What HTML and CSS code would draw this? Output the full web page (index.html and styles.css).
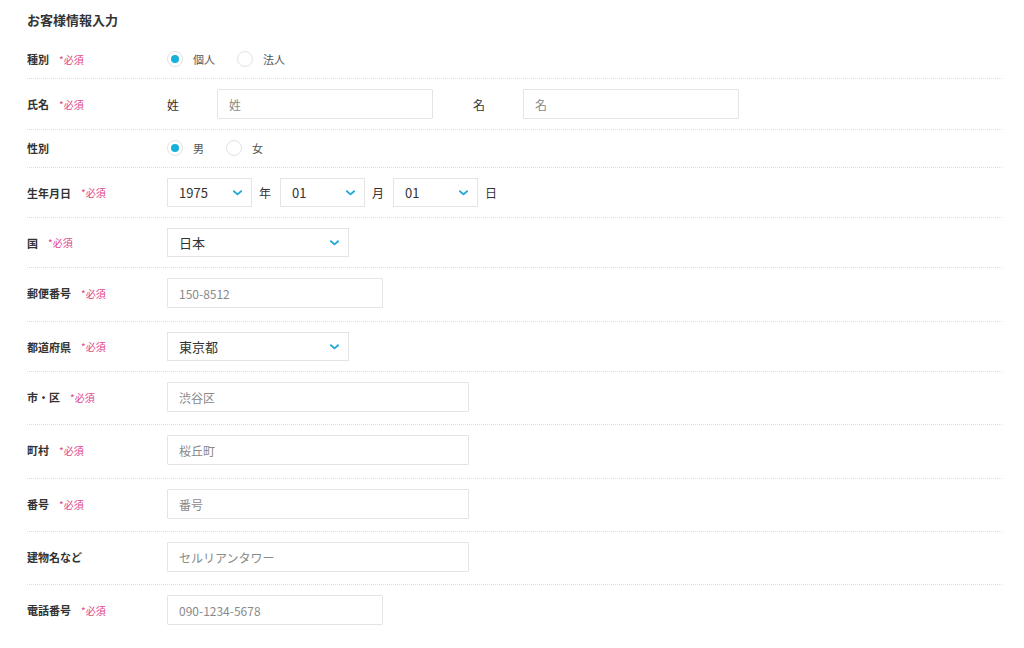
FILE: index.html
```html
<!DOCTYPE html>
<html lang="ja">
<head>
    <meta charset="UTF-8">
    <meta name="viewport" content="width=device-width, initial-scale=1.0">
    <title>お客様情報入力</title>
    <link rel="stylesheet" href="styles.css">
</head>
<body>
    <div class="form">
        <h1>お客様情報入力</h1>

        <div class="row row-radio">
            <div class="label">種別<span class="req">*必須</span></div>
            <div class="field">
                <label class="radio"><span class="dot checked"></span>個人</label>
                <label class="radio"><span class="dot"></span>法人</label>
            </div>
        </div>

        <div class="row">
            <div class="label">氏名<span class="req">*必須</span></div>
            <div class="field">
                <span class="sub">姓</span>
                <input type="text" class="input w216" placeholder="姓">
                <span class="sub sub-gap">名</span>
                <input type="text" class="input w216" placeholder="名">
            </div>
        </div>

        <div class="row row-radio">
            <div class="label">性別</div>
            <div class="field">
                <label class="radio"><span class="dot checked"></span>男</label>
                <label class="radio"><span class="dot"></span>女</label>
            </div>
        </div>

        <div class="row">
            <div class="label">生年月日<span class="req">*必須</span></div>
            <div class="field">
                <div class="select w84">1975<svg class="chev" viewBox="0 0 10 6"><path d="M1 1 L5 4.5 L9 1"/></svg></div>
                <span class="unit">年</span>
                <div class="select w84">01<svg class="chev" viewBox="0 0 10 6"><path d="M1 1 L5 4.5 L9 1"/></svg></div>
                <span class="unit">月</span>
                <div class="select w84">01<svg class="chev" viewBox="0 0 10 6"><path d="M1 1 L5 4.5 L9 1"/></svg></div>
                <span class="unit">日</span>
            </div>
        </div>

        <div class="row">
            <div class="label">国<span class="req">*必須</span></div>
            <div class="field">
                <div class="select w181">日本<svg class="chev" viewBox="0 0 10 6"><path d="M1 1 L5 4.5 L9 1"/></svg></div>
            </div>
        </div>

        <div class="row row-text row-tall">
            <div class="label">郵便番号<span class="req">*必須</span></div>
            <div class="field">
                <input type="text" class="input w215" placeholder="150-8512">
            </div>
        </div>

        <div class="row">
            <div class="label">都道府県<span class="req">*必須</span></div>
            <div class="field">
                <div class="select w181">東京都<svg class="chev" viewBox="0 0 10 6"><path d="M1 1 L5 4.5 L9 1"/></svg></div>
            </div>
        </div>

        <div class="row row-text">
            <div class="label">市・区<span class="req">*必須</span></div>
            <div class="field">
                <input type="text" class="input w301" placeholder="渋谷区">
            </div>
        </div>

        <div class="row row-text row-tall">
            <div class="label">町村<span class="req">*必須</span></div>
            <div class="field">
                <input type="text" class="input w301" placeholder="桜丘町">
            </div>
        </div>

        <div class="row row-text">
            <div class="label">番号<span class="req">*必須</span></div>
            <div class="field">
                <input type="text" class="input w301" placeholder="番号">
            </div>
        </div>

        <div class="row row-text">
            <div class="label">建物名など</div>
            <div class="field">
                <input type="text" class="input w301" placeholder="セルリアンタワー">
            </div>
        </div>

        <div class="row row-text last">
            <div class="label">電話番号<span class="req">*必須</span></div>
            <div class="field">
                <input type="text" class="input w215" placeholder="090-1234-5678">
            </div>
        </div>
    </div>
</body>
</html>
```

FILE: styles.css
```css
body {
    margin: 0;
    padding: 0;
    background-color: #fff;
    font-family: "Noto Sans CJK JP", "Liberation Sans", sans-serif;
    color: #333;
}
.form {
    margin: 0 22px 0 27px;
    padding-top: 11px;
}
h1 {
    font-size: 13px;
    line-height: 18px;
    font-weight: bold;
    margin: 0 0 12px 0;
    color: #333;
}
.row {
    display: flex;
    align-items: center;
    padding: 10px 0;
    border-bottom: 1px dotted #dcdcdc;
}
.row-radio {
    padding: 10px 0 11px 0;
    min-height: 16px;
}
.row-text {
    padding: 10px 0 12px 0;
}
.row-tall {
    padding-bottom: 13px;
}
.row.last {
    border-bottom: none;
}
.label {
    width: 140px;
    flex-shrink: 0;
    font-size: 11px;
    font-weight: bold;
    color: #333;
    display: flex;
    align-items: center;
}
.req {
    font-size: 10px;
    font-weight: normal;
    color: #e0468a;
    margin-left: 10px;
}
.field {
    display: flex;
    align-items: center;
}
.radio {
    display: flex;
    align-items: center;
    font-size: 11px;
    color: #555;
    margin-right: 22px;
}
.dot {
    width: 16px;
    height: 16px;
    border: 1px solid #e2e2e2;
    border-radius: 50%;
    box-sizing: border-box;
    display: flex;
    align-items: center;
    justify-content: center;
    margin-right: 10px;
}
.dot.checked::after {
    content: "";
    width: 8px;
    height: 8px;
    border-radius: 50%;
    background-color: #16b1da;
}
.sub {
    font-size: 12px;
    color: #333;
    width: 50px;
}
.sub-gap {
    margin-left: 40px;
}
.input {
    height: 30px;
    box-sizing: border-box;
    border: 1px solid #e4e4e4;
    border-radius: 1px;
    padding: 0 11px;
    font-family: inherit;
    font-size: 12px;
    color: #333;
    outline: none;
}
.input::placeholder {
    color: #8a8a8a;
}
.w216 { width: 216px; }
.w215 { width: 216px; }
.w301 { width: 302px; }
.w84 { width: 85px; }
.w181 { width: 182px; }
.select {
    height: 29px;
    box-sizing: border-box;
    border: 1px solid #e4e4e4;
    padding: 0 9px 0 11px;
    font-size: 13px;
    color: #333;
    display: flex;
    align-items: center;
    justify-content: space-between;
}
.chev {
    width: 9px;
    height: 6px;
    fill: none;
    stroke: #22a8d8;
    stroke-width: 2;
    stroke-linecap: round;
    stroke-linejoin: round;
}
.unit {
    font-size: 12px;
    color: #333;
    margin: 0 9px 0 7px;
}
```
